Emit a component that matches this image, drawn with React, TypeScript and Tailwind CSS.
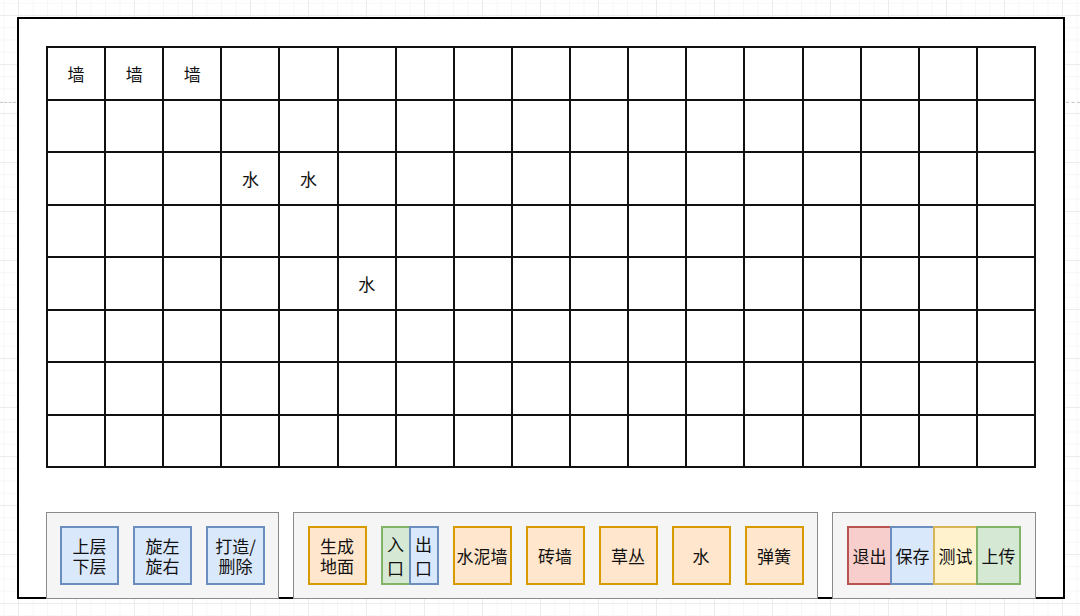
import React from "react";

type Tone = "blue" | "orange" | "green" | "red" | "yellow";

const tones: Record<Tone, string> = {
  blue: "bg-[#dae8fc] border-[#6c8ebf]",
  orange: "bg-[#ffe6cc] border-[#d79b00]",
  green: "bg-[#d5e8d4] border-[#82b366]",
  red: "bg-[#f8cecc] border-[#b85450]",
  yellow: "bg-[#fff2cc] border-[#d6b656]",
};

const cells: Record<string, string> = {
  "0-0": "墙",
  "0-1": "墙",
  "0-2": "墙",
  "2-3": "水",
  "2-4": "水",
  "4-5": "水",
};

function Tool({ tone, lines, className = "" }: { tone: Tone; lines: string[]; className?: string }) {
  return (
    <div
      className={`flex items-center justify-center border-2 text-center text-[17px] leading-5 text-[#111] ${tones[tone]} ${className}`}
    >
      <p>
        {lines.map((l, i) => (
          <React.Fragment key={l}>
            {i > 0 && <br />}
            {l}
          </React.Fragment>
        ))}
      </p>
    </div>
  );
}

function Panel({ className, children }: { className: string; children: React.ReactNode }) {
  return (
    <div
      className={`flex h-[87px] items-center justify-center border border-[#8a8a8a] bg-[#f5f5f5] ${className}`}
    >
      {children}
    </div>
  );
}

export default function App() {
  return (
    <div
      className="relative h-[616px] w-[1080px] overflow-hidden bg-white pl-[17px] pt-[17px] bg-[linear-gradient(to_right,#ececec_1px,transparent_1px),linear-gradient(to_bottom,#ececec_1px,transparent_1px),linear-gradient(to_right,#f6f6f6_1px,transparent_1px),linear-gradient(to_bottom,#f6f6f6_1px,transparent_1px)] bg-[size:58px_49px,58px_49px,14.5px_12.25px,14.5px_12.25px] bg-[position:18px_15px,18px_15px,18px_15px,18px_15px]"
      style={{ fontFamily: '"Noto Sans CJK SC", "Noto Sans", sans-serif' }}
    >
      {/* page break markers */}
      <div className="absolute left-0 top-[102px] w-[16px] border-t border-dashed border-[#c8c8c8]" />
      <div className="absolute right-0 top-[102px] w-[14px] border-t border-dashed border-[#c8c8c8]" />

      <div className="flex h-[582px] w-[1048px] flex-col border-2 border-black bg-white pl-[27px] pt-[27px]">
        {/* map grid */}
        <div className="grid h-[422px] w-[990px] grid-cols-[repeat(17,1fr)] grid-rows-[repeat(8,1fr)] gap-[2px] bg-[#111] p-[2px]">
          {Array.from({ length: 8 }).map((_, r) =>
            Array.from({ length: 17 }).map((_, c) => (
              <div
                key={`${r}-${c}`}
                className="flex items-center justify-center bg-white text-[17px] text-[#111]"
              >
                {cells[`${r}-${c}`] ?? ""}
              </div>
            ))
          )}
        </div>

        {/* toolbars */}
        <div className="mt-[44px] mb-[-2px] flex gap-[14px]">
          <Panel className="w-[233px] gap-[14px]">
            <Tool tone="blue" lines={["上层", "下层"]} className="h-[59px] w-[59px]" />
            <Tool tone="blue" lines={["旋左", "旋右"]} className="h-[59px] w-[59px]" />
            <Tool tone="blue" lines={["打造/", "删除"]} className="h-[59px] w-[59px]" />
          </Panel>

          <Panel className="w-[525px] gap-[14px]">
            <Tool tone="orange" lines={["生成", "地面"]} className="h-[59px] w-[59px]" />
            <div className="flex">
              <Tool tone="green" lines={["入", "口"]} className="h-[59px] w-[30px] leading-6" />
              <Tool tone="blue" lines={["出", "口"]} className="-ml-[2px] h-[59px] w-[30px] leading-6" />
            </div>
            <Tool tone="orange" lines={["水泥墙"]} className="h-[59px] w-[59px]" />
            <Tool tone="orange" lines={["砖墙"]} className="h-[59px] w-[59px]" />
            <Tool tone="orange" lines={["草丛"]} className="h-[59px] w-[59px]" />
            <Tool tone="orange" lines={["水"]} className="h-[59px] w-[59px]" />
            <Tool tone="orange" lines={["弹簧"]} className="h-[59px] w-[59px]" />
          </Panel>

          <Panel className="w-[204px]">
            <Tool tone="red" lines={["退出"]} className="h-[59px] w-[45px]" />
            <Tool tone="blue" lines={["保存"]} className="-ml-[2px] h-[59px] w-[45px]" />
            <Tool tone="yellow" lines={["测试"]} className="-ml-[2px] h-[59px] w-[45px]" />
            <Tool tone="green" lines={["上传"]} className="-ml-[2px] h-[59px] w-[45px]" />
          </Panel>
        </div>
      </div>
    </div>
  );
}
